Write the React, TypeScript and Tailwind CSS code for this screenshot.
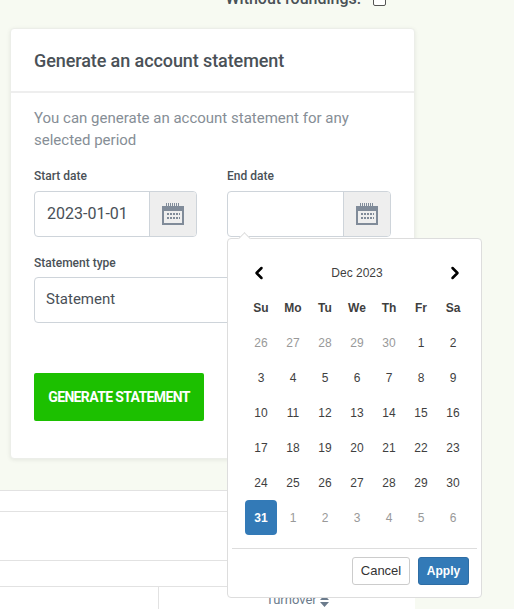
import { ChevronLeft, ChevronRight } from 'lucide-react';

const WEEKDAYS = ['Su', 'Mo', 'Tu', 'We', 'Th', 'Fr', 'Sa'];

const DAYS = [
  [26, 27, 28, 29, 30, 1, 2],
  [3, 4, 5, 6, 7, 8, 9],
  [10, 11, 12, 13, 14, 15, 16],
  [17, 18, 19, 20, 21, 22, 23],
  [24, 25, 26, 27, 28, 29, 30],
  [31, 1, 2, 3, 4, 5, 6],
];

function CalendarIcon() {
  return (
    <svg width="22" height="22" viewBox="0 0 22 22" fill="#808b99">
      <path d="M4 0h1v3H4zM6 0h1v3H6zM8 0h1v3H8zM10 0h1v3h-1zM12 0h1v3h-1zM14 0h1v3h-1zM16 0h1v3h-1z" />
      <path fillRule="evenodd" d="M0 3h22v19H0zM2 8v12h18V8z" />
      <path d="M5 10h2v2H5zM8 10h2v2H8zM11 10h2v2h-2zM14 10h2v2h-2zM17 10h1v2h-1zM5 14h2v2H5zM8 14h2v2H8zM11 14h2v2h-2zM14 14h2v2h-2zM17 14h1v2h-1z" />
    </svg>
  );
}

function DateField({ label, value, width }: { label: string; value: string; width: string }) {
  return (
    <div className={width}>
      <div className="mb-[5px] h-[19px] text-[12px] leading-[19px] font-medium text-[#4a5157]">{label}</div>
      <div className="flex h-[46px] rounded-[4px] border border-[#ced4da]">
        <div className="flex flex-1 items-center px-3 text-[16px] text-[#495057]">{value}</div>
        <div className="flex w-[47px] items-center justify-center rounded-r-[3px] border-l border-[#ced4da] bg-[#eeeeee]">
          <CalendarIcon />
        </div>
      </div>
    </div>
  );
}

function DatePicker() {
  return (
    <div className="absolute top-[238px] left-[227px] h-[360px] w-[255px] rounded-[4px] border border-[#dddddd] bg-white font-['Liberation_Sans',sans-serif] text-[12px] text-[#3f3f3f]">
      <div className="absolute -top-[5px] left-[12px] h-[9px] w-[9px] rotate-45 border-t border-l border-[#dddddd] bg-white" />
      <div className="mt-[16px] flex h-[35px] items-center justify-between pr-[16px] pl-[21px]">
        <ChevronLeft size={20} strokeWidth={3} className="text-black" />
        <span>Dec 2023</span>
        <ChevronRight size={20} strokeWidth={3} className="text-black" />
      </div>
      <div className="ml-[17px] grid w-[224px] grid-cols-7">
        {WEEKDAYS.map((day) => (
          <div key={day} className="flex h-[35px] items-center justify-center font-bold">
            {day}
          </div>
        ))}
        {DAYS.map((week, row) =>
          week.map((day, col) => {
            const muted = (row === 0 && day > 7) || (row === 5 && col > 0);
            const selected = row === 5 && col === 0;
            return (
              <div
                key={`${row}-${col}`}
                className={
                  selected
                    ? 'flex h-[35px] items-center justify-center rounded-[4px] bg-[#337ab7] font-bold text-white'
                    : muted
                      ? 'flex h-[35px] items-center justify-center text-[#999999]'
                      : 'flex h-[35px] items-center justify-center'
                }
              >
                {day}
              </div>
            );
          }),
        )}
      </div>
      <div className="mx-[4px] mt-[13px] flex justify-end gap-2 border-t border-[#dddddd] pt-2 pr-[8px]">
        <button className="h-[28px] w-[58px] rounded-[3px] border border-[#cccccc] bg-white text-[13px] text-[#333333]">Cancel</button>
        <button className="h-[28px] w-[51px] rounded-[3px] border border-[#2e6da4] bg-[#337ab7] font-bold text-white">Apply</button>
      </div>
    </div>
  );
}

export default function App() {
  return (
    <div className="relative h-[609px] w-[514px] overflow-hidden bg-[#f7faf2] font-['Roboto',sans-serif]">
      <div className="flex h-[28px] justify-end pr-[128px]">
        <div className="-mt-[11px] flex h-[20px] items-center gap-[12px]">
          <span className="text-[16px] font-medium text-[#4a5157]">Without roundings:</span>
          <span className="h-[13px] w-[13px] rounded-[2px] border border-[#555555] bg-white" />
        </div>
      </div>

      <div className="ml-[10px] h-[431px] w-[405px] rounded-[4px] border border-[#eceee9] bg-white shadow-[0_1px_4px_rgba(0,0,0,0.08)]">
        <div className="flex h-[64px] items-center border-b-2 border-[#eeeeee] px-[23px] text-[18px] font-medium tracking-[-0.005em] text-[#4a5157]">
          Generate an account statement
        </div>
        <div className="px-[23px] pt-[14px]">
          <p className="text-[15px] leading-[22px] text-[#868e96]">
            You can generate an account statement for any selected period
          </p>
          <div className="mt-[16px] flex gap-[30px]">
            <DateField label="Start date" value="2023-01-01" width="w-[163px]" />
            <DateField label="End date" value="" width="w-[164px]" />
          </div>
          <div className="mt-[17px] mb-[4px] h-[19px] text-[12px] leading-[19px] font-medium text-[#4a5157]">Statement type</div>
          <div className="flex h-[46px] items-center rounded-[4px] border border-[#ced4da] px-[11px] pb-[2px] text-[15px] text-[#495057]">
            Statement
          </div>
          <button className="mt-[50px] h-[48px] w-[170px] rounded-[2px] bg-[#1cc000] text-[14px] font-bold tracking-[-0.045em] text-white">
            GENERATE STATEMENT
          </button>
        </div>
      </div>

      <div className="mt-[31px] w-[415px] border-t border-[#e2e2e2] bg-white">
        <div className="h-[21px] border-b border-[#e2e2e2]" />
        <div className="h-[49px] border-b border-[#e2e2e2]" />
        <div className="h-[26px] border-b border-[#e2e2e2]" />
        <div className="flex h-[30px]">
          <div className="w-[159px] border-r border-[#e2e2e2]" />
          <div className="flex flex-1 items-start gap-[3px] pt-[5px] pl-[107px] text-[13px] leading-[16px] text-[#6b7b8c]">
            Turnover
            <svg width="9" height="12" viewBox="0 0 9 12" fill="#6b7b8c" className="mt-[3px] shrink-0">
              <path d="M4.5 0 9 5H0zM0 7h9l-4.5 5z" />
            </svg>
          </div>
        </div>
      </div>

      <DatePicker />
    </div>
  );
}
